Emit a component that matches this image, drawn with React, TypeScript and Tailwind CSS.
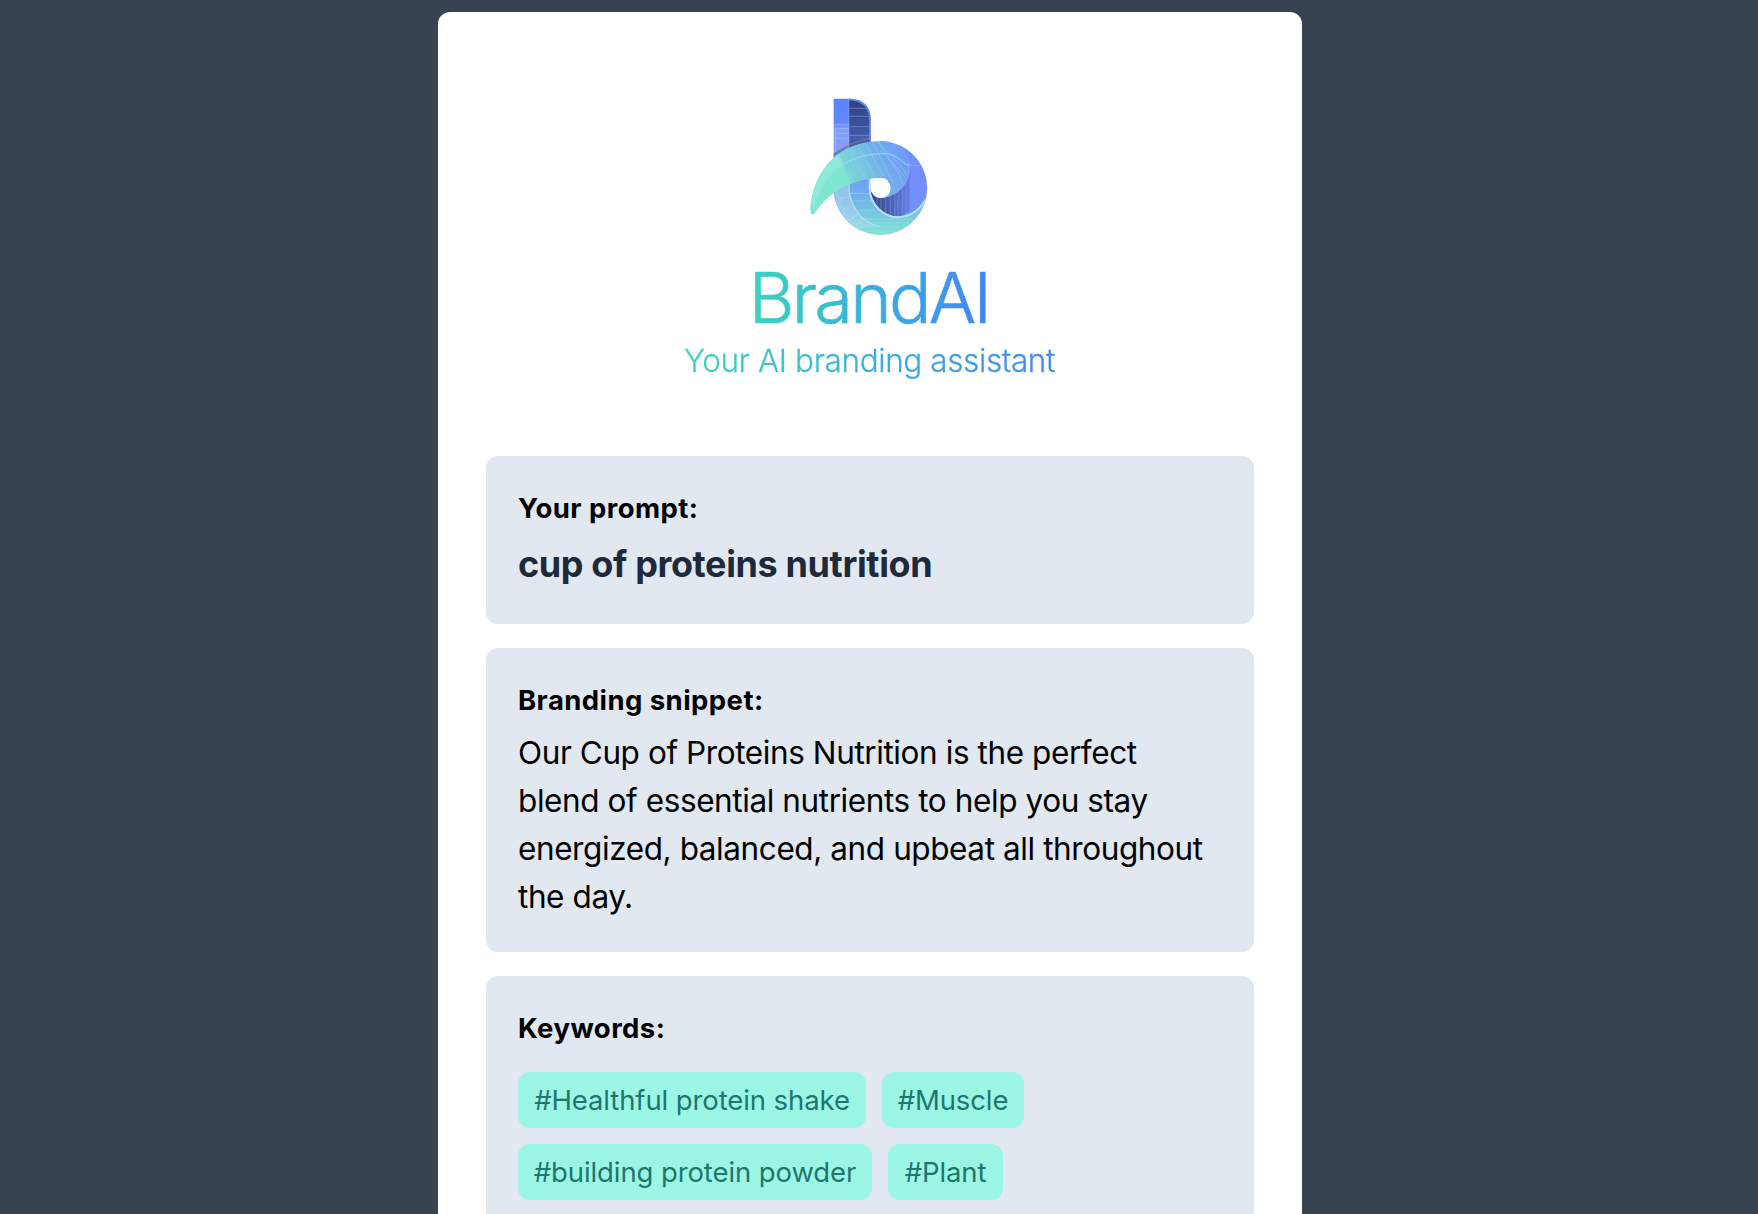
import type { ReactNode } from "react";

const keywordRows = [
  [
    { text: "#Healthful protein shake", width: "w-[348px]" },
    { text: "#Muscle", width: "w-[142px]" },
  ],
  [
    { text: "#building protein powder", width: "w-[354px]" },
    { text: "#Plant", width: "w-[115px]" },
  ],
];

function Logo() {
  return (
    <svg viewBox="0 0 480 510" className="h-[170px] w-[160px]" fill="none">
      <defs>
        <linearGradient id="stem" x1="0" y1="55" x2="0" y2="230" gradientUnits="userSpaceOnUse">
          <stop offset="0" stopColor="#5b84ff" />
          <stop offset=".42" stopColor="#6189fb" />
          <stop offset=".52" stopColor="#809cff" />
          <stop offset="1" stopColor="#8b9ff5" />
        </linearGradient>
        <linearGradient id="fold" x1="0" y1="60" x2="0" y2="205" gradientUnits="userSpaceOnUse">
          <stop offset="0" stopColor="#2f437f" />
          <stop offset=".55" stopColor="#3b539f" />
          <stop offset=".8" stopColor="#4660ae" />
          <stop offset="1" stopColor="#2f437d" />
        </linearGradient>
        <linearGradient id="leaf" x1="90" y1="330" x2="350" y2="210" gradientUnits="userSpaceOnUse">
          <stop offset="0" stopColor="#7fe8d1" />
          <stop offset=".32" stopColor="#7fe5d2" />
          <stop offset=".33" stopColor="#7cd4d9" />
          <stop offset=".5" stopColor="#79c6e0" />
          <stop offset=".7" stopColor="#72afec" />
          <stop offset="1" stopColor="#6f98f8" />
        </linearGradient>
        <linearGradient id="bowl" x1="0" y1="300" x2="0" y2="464" gradientUnits="userSpaceOnUse">
          <stop offset="0" stopColor="#6f9ff6" />
          <stop offset=".4" stopColor="#73b7e8" />
          <stop offset=".7" stopColor="#77cede" />
          <stop offset="1" stopColor="#7de9cf" />
        </linearGradient>
        <linearGradient id="shade" x1="241" y1="0" x2="364" y2="0" gradientUnits="userSpaceOnUse">
          <stop offset="0" stopColor="#334780" />
          <stop offset=".5" stopColor="#4963b4" />
          <stop offset="1" stopColor="#6583ee" />
        </linearGradient>
      </defs>
      {/* stem */}
      <path d="M131 56H177V200L131 236Z" fill="url(#stem)" />
      <path d="M177 56Q241 58 241 118V190L177 206Z" fill="url(#fold)" />
      <path d="M177 58Q239 61 240 118V188" stroke="#6487fa" strokeWidth="5" />
      <path d="M131 219Q177 186 241 175V192L177 206L131 238Z" fill="#53659f" fillOpacity=".6" />
      <path d="M131 219Q177 186 241 175M177 56V204" stroke="#a9baf6" strokeOpacity=".5" strokeWidth="2" />
      <path d="M131 133H177M137 145H177M137 160H177M137 175H177M137 145V215" stroke="#b4c5ff" strokeOpacity=".7" strokeWidth="2" />
      <path d="M177 85H228M177 109H239M177 140H239M177 166H239" stroke="#8aa0dd" strokeOpacity=".8" strokeWidth="2" />
      {/* right side of the ring */}
      <path d="M271 184A140 140 0 0 1 408 353Q375 412 325 410L300 340Z" fill="#718fff" />
      {/* inner shadow */}
      <path d="M241 325Q250 354 272 354C320 350 357 315 362 270V385Q345 412 318 409C275 406 241 365 241 325Z" fill="url(#shade)" />
      <path d="M261 352V383M273 354V395M287 352V402M301 347V407M315 340V409M324 334V409M337 323V409M348 309V404M361 285V390" stroke="#91a4ee" strokeOpacity=".65" strokeWidth="2" />
      {/* lower bowl */}
      <path d="M131 315L185 290H241V325C241 372 280 412 325 412Q376 410 408 353A140 140 0 0 1 271 464A140 140 0 0 1 131 324Z" fill="url(#bowl)" />
      <path d="M131 324L176 308C176 370 205 425 271 440L205 446A140 140 0 0 1 131 324Z" fill="#bcd5f4" fillOpacity=".5" />
      <path d="M178 340H242M181 363H252M188 391H274M215 417H372M230 429H362M250 441H346M225 453H315" stroke="#a5dcea" strokeOpacity=".8" strokeWidth="2" />
      <path d="M176 308C176 370 205 425 271 440" stroke="#b0e1ec" strokeWidth="4" />
      <path d="M137 342L152 355L170 352M152 355L145 374L163 387L179 382M163 387L160 405L176 419L194 414M176 419L183 434M200 432L212 428L222 438L212 446L199 441Z" stroke="#a9ebe6" strokeOpacity=".8" strokeWidth="2" />
      <path d="M239 298V325C239 372 280 413 325 412Q379 408 406 360" stroke="#b7dff5" strokeWidth="6" />
      {/* leaf */}
      <path d="M66 403C58 402 61 375 65 355C80 275 140 184 271 184C320 184 357 218 357 262C357 312 317 354 272 354Q302 349 302 324C302 304 290 294 272 294C185 296 116 337 75 399Q71 404 66 403Z" fill="url(#leaf)" />
      <path d="M70 386C86 315 120 272 163 249L144 221C100 258 72 310 63 366Z" fill="#a9f0e3" fillOpacity=".35" />
      <path d="M70 386C91 290 165 220 285 221C315 223 325 235 345 252L357 256" stroke="#a8e3ef" strokeOpacity=".8" strokeWidth="3" />
      <path d="M357 256H390" stroke="#91b5fb" strokeWidth="2" />
      <path d="M163 258L190 305M142 228L163 258M180 211L226 297M204 201L254 290M227 191L282 294M249 188L310 310M264 186L326 280L336 310M272 213L346 291M262 184L330 255L350 285M101 270L119 293M120 248L139 272" stroke="#9bd7ed" strokeOpacity=".7" strokeWidth="2" />
      <path d="M310 192C340 205 357 230 357 262C357 298 338 327 311 343" stroke="#91b5fb" strokeWidth="2" />
      {/* counter */}
      <circle cx="272" cy="324" r="30" fill="#fff" />
      <path d="M242 297L272 294V325H242Z" fill="#fff" />
      <path d="M131 324A140 140 0 0 0 271 464A140 140 0 0 0 271 184" stroke="#6f9cf0" strokeOpacity=".4" strokeWidth="2" />
    </svg>
  );
}

function Panel({ title, children }: { title: string; children: ReactNode }) {
  return (
    <section className="rounded-xl bg-[#e1e8ef] p-8">
      <h2 className="mb-2 text-[27.5px] leading-10 font-bold tracking-[0.43px]">{title}</h2>
      {children}
    </section>
  );
}

export default function App() {
  return (
    <div className="h-[1214px] overflow-hidden bg-[#394251] pt-3 pr-[18px] font-[Inter,sans-serif] text-black">
      <main className="mx-auto w-[864px] rounded-xl bg-white px-12 pt-[68px] pb-12">
        <header className="mb-[69px] flex flex-col items-center">
          <Logo />
          <h1 className="mt-3 -ml-0.5 bg-gradient-to-r from-[#3bd4bd] to-[#4285f6] bg-clip-text text-[70.5px] leading-[72px] font-light tracking-[-2.75px] text-transparent [-webkit-text-stroke:0.7px_transparent]">
            BrandAI
          </h1>
          <p className="-ml-px bg-gradient-to-r from-[#3bd4bd] to-[#4285f6] bg-clip-text text-[31.5px] leading-[53px] font-light tracking-[-0.4px] text-transparent [-webkit-text-stroke:0.3px_transparent]">
            Your AI branding assistant
          </p>
        </header>
        <div className="flex flex-col gap-6">
          <Panel title="Your prompt:">
            <p className="text-[36px] leading-[56px] font-bold tracking-[-0.37px] text-[#1e293b]">
              cup of proteins nutrition
            </p>
          </Panel>
          <Panel title="Branding snippet:">
            <p className="-mb-px pt-px text-[31.5px] leading-[48px] tracking-[-0.41px]">
              Our Cup of Proteins Nutrition is the perfect blend of essential nutrients to help you
              stay energized, balanced, and upbeat all throughout the day.
            </p>
          </Panel>
          <Panel title="Keywords:">
            <div className="mt-6 flex flex-col gap-4">
              {keywordRows.map((row) => (
                <div key={row[0].text} className="flex gap-4">
                  {row.map((k) => (
                    <span
                      key={k.text}
                      className={`${k.width} rounded-xl bg-[#9cf6e4] py-2 text-center text-[27.5px] leading-10 tracking-[-0.1px] whitespace-nowrap text-[#1e766f]`}
                    >
                      {k.text}
                    </span>
                  ))}
                </div>
              ))}
            </div>
          </Panel>
        </div>
      </main>
    </div>
  );
}
